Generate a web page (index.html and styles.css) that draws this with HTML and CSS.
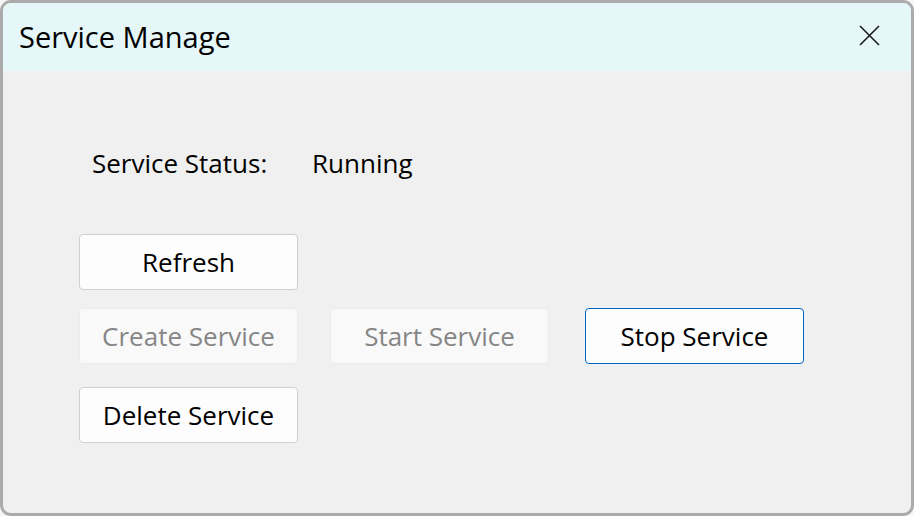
FILE: index.html
```html
<!DOCTYPE html>
<html>
<head>
<meta charset="utf-8">
<link rel="stylesheet" href="styles.css">
</head>
<body>
<div class="window">
  <div class="titlebar">
    <span class="title">Service Manage</span>
    <svg class="close" width="21" height="21" viewBox="0 0 21 21"><path d="M1 1 L20 20 M20 1 L1 20" stroke="#1a1a1a" stroke-width="1.6" fill="none"/></svg>
  </div>
  <div class="content">
    <div class="status">
      <span class="label">Service Status:</span>
      <span class="value">Running</span>
    </div>
    <div class="row row1">
      <button class="btn">Refresh</button>
    </div>
    <div class="row row2">
      <button class="btn disabled">Create Service</button>
      <button class="btn disabled start">Start Service</button>
      <button class="btn focus stop">Stop Service</button>
    </div>
    <div class="row row3">
      <button class="btn">Delete Service</button>
    </div>
  </div>
</div>
</body>
</html>
```

FILE: styles.css
```css
html, body {
  margin: 0;
  padding: 0;
  width: 914px;
  height: 516px;
  background: #f6f6f6;
  overflow: hidden;
}
.window {
  box-sizing: border-box;
  width: 914px;
  height: 516px;
  border: 3px solid #ababab;
  border-radius: 11px;
  background: #f0f0f0;
  overflow: hidden;
  font-family: "Open Sans", "Noto Sans", sans-serif;
  color: #000;
}
.titlebar {
  height: 68px;
  background: #e5f7f8;
  display: flex;
  align-items: center;
  justify-content: space-between;
  padding: 0 31px 0 16px;
}
.title {
  font-size: 29px;
  letter-spacing: 0;
  margin-top: -2px;
}
.close {
  display: block;
  margin-top: -4px;
}
.content {
  padding: 0 0 0 76px;
}
.status {
  display: flex;
  margin-top: 72px;
  margin-left: 13px;
  font-size: 26px;
  line-height: 40px;
}
.label {
  width: 220px;
}
.row {
  display: flex;
}
.row1 { margin-top: 51px; }
.row2 { margin-top: 18px; }
.row3 { margin-top: 23px; }
.btn {
  box-sizing: border-box;
  width: 219px;
  height: 56px;
  background: #fdfdfd;
  border: 1px solid #cfcfcf;
  border-radius: 4px;
  font-family: "Open Sans", "Noto Sans", sans-serif;
  font-size: 26px;
  color: #000;
  padding: 0;
}
.btn.disabled {
  background: #f9f9f9;
  border-color: #ececec;
  color: #868686;
}
.btn.start { margin-left: 32px; }
.btn.stop { margin-left: 36px; }
.btn.focus {
  border-color: #0067c0;
}
```
